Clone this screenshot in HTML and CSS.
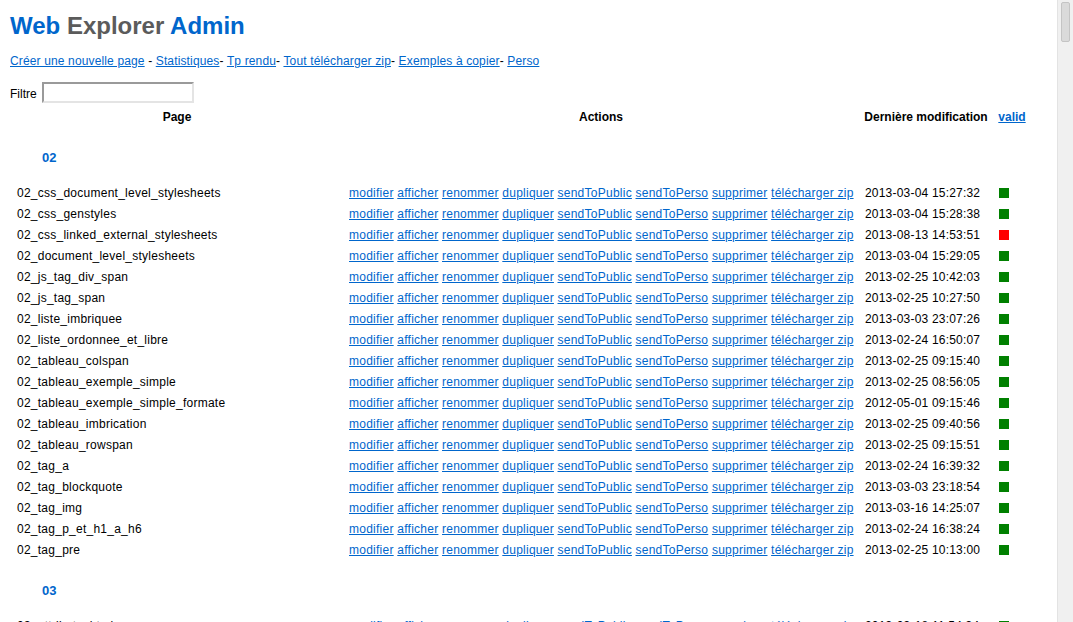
FILE: index.html
```html
<!DOCTYPE html>
<html lang="fr">
<head>
<meta charset="utf-8">
<title>Web Explorer Admin</title>
<link rel="stylesheet" href="styles.css">
</head>
<body>
<div class="page">
  <h1 class="title"><span class="t-blue">Web</span> <span class="t-gray">Explorer</span> <span class="t-blue">Admin</span></h1>
  <p class="menu"><a href="#">Créer une nouvelle page</a> - <a href="#">Statistiques</a>- <a href="#">Tp rendu</a>- <a href="#">Tout télécharger zip</a>- <a href="#">Exemples à copier</a>- <a href="#">Perso</a></p>
  <div class="filter"><label class="filter-label" for="f">Filtre</label><input id="f" class="filter-input" type="text"></div>
  <table class="list">
    <thead>
      <tr class="head-row">
        <th class="c-page">Page</th>
        <th class="c-actions">Actions</th>
        <th class="c-date">Dernière modification</th>
        <th class="c-valid"><a href="#">valid</a></th>
      </tr>
    </thead>
    <tbody id="rows"></tbody>
  </table>
</div>
<div class="scrollbar"><div class="thumb"></div></div>
<script src="script.js"></script>
</body>
</html>
```

FILE: styles.css
```css
html, body {
  margin: 0;
  padding: 0;
  background: #fff;
}
body {
  font-family: "Liberation Sans", Arial, sans-serif;
  font-size: 12px;
  color: #000;
}
a {
  color: #0066cc;
  text-decoration: underline;
}
.page {
  padding: 0 0 40px 10px;
}
.title {
  margin: 12px 0 0 0;
  font-size: 24px;
  line-height: 28px;
  font-weight: bold;
}
.t-blue { color: #0066cc; }
.t-gray { color: #5b5b5b; }
.menu {
  margin: 14px 0 0 0;
  line-height: 14px;
  letter-spacing: 0.14px;
}
.filter {
  margin-top: 14px;
  display: flex;
  align-items: center;
  height: 21px;
}
.filter-label {
  line-height: 14px;
  padding-top: 2px;
  width: 32px;
}
.filter-input {
  box-sizing: border-box;
  width: 152px;
  height: 21px;
  margin: 0;
  padding: 1px 2px;
  border: 2px solid;
  border-color: #9a9a9a #e4e4e4 #e4e4e4 #9a9a9a;
  font: 12px "Liberation Sans", Arial, sans-serif;
  background: #fff;
}
.list {
  margin: 3px 0 0 3px;
  border-collapse: collapse;
  table-layout: fixed;
  width: 1020px;
}
.list th, .list td {
  padding: 0;
  height: 21px;
  line-height: 14px;
  white-space: nowrap;
  vertical-align: middle;
}
.list td {
  letter-spacing: 0.25px;
}
.list th {
  font-weight: bold;
  text-align: center;
}
.c-page { width: 328px; }
.c-actions { width: 520px; }
.c-date { width: 130px; }
.c-valid { width: 42px; }
.list td.p { padding-left: 4px; }
.list td.a { padding-left: 8px; }
.list td.d { padding-left: 4px; letter-spacing: 0.2px; }
.list td.v { padding-left: 8px; }
.group td {
  height: auto;
  padding: 23px 0 17px 29px;
  font-size: 13px;
  line-height: 15px;
  font-weight: bold;
  color: #0066cc;
  letter-spacing: 0;
}
.sq {
  display: block;
  width: 10px;
  height: 10px;
}
.sq.ok { background: #008000; }
.sq.ko { background: #ff0000; }
.scrollbar {
  position: fixed;
  top: 0;
  right: 0;
  bottom: 0;
  width: 15px;
  background: #f0f0f0;
  border-left: 1px solid #e3e3e3;
}
.thumb {
  margin: 2px 0 0 3px;
  width: 9px;
  height: 40px;
  box-sizing: border-box;
  background: #dadada;
  border: 1px solid #c4c4c4;
  border-radius: 2px;
}
```

FILE: script.js
```js
var groups = [
  ["02", [
    ["02_css_document_level_stylesheets", "2013-03-04 15:27:32", 1],
    ["02_css_genstyles", "2013-03-04 15:28:38", 1],
    ["02_css_linked_external_stylesheets", "2013-08-13 14:53:51", 0],
    ["02_document_level_stylesheets", "2013-03-04 15:29:05", 1],
    ["02_js_tag_div_span", "2013-02-25 10:42:03", 1],
    ["02_js_tag_span", "2013-02-25 10:27:50", 1],
    ["02_liste_imbriquee", "2013-03-03 23:07:26", 1],
    ["02_liste_ordonnee_et_libre", "2013-02-24 16:50:07", 1],
    ["02_tableau_colspan", "2013-02-25 09:15:40", 1],
    ["02_tableau_exemple_simple", "2013-02-25 08:56:05", 1],
    ["02_tableau_exemple_simple_formate", "2012-05-01 09:15:46", 1],
    ["02_tableau_imbrication", "2013-02-25 09:40:56", 1],
    ["02_tableau_rowspan", "2013-02-25 09:15:51", 1],
    ["02_tag_a", "2013-02-24 16:39:32", 1],
    ["02_tag_blockquote", "2013-03-03 23:18:54", 1],
    ["02_tag_img", "2013-03-16 14:25:07", 1],
    ["02_tag_p_et_h1_a_h6", "2013-02-24 16:38:24", 1],
    ["02_tag_pre", "2013-02-25 10:13:00", 1]
  ]],
  ["03", [
    ["03_attributs_html", "2013-03-18 11:54:34", 1],
    ["03_balises_html5", "2013-03-18 11:58:12", 1],
    ["03_formulaire", "2013-03-18 12:04:51", 1]
  ]]
];
var actions = ["modifier", "afficher", "renommer", "dupliquer", "sendToPublic", "sendToPerso", "supprimer", "télécharger zip"];
var tbody = document.getElementById("rows");
var html = "";
groups.forEach(function (g) {
  html += '<tr class="group"><td colspan="4">' + g[0] + '</td></tr>';
  g[1].forEach(function (r) {
    html += '<tr><td class="p">' + r[0] + '</td><td class="a">' +
      actions.map(function (a) { return '<a href="#">' + a + '</a>'; }).join(" ") +
      '</td><td class="d">' + r[1] + '</td><td class="v"><span class="sq ' + (r[2] ? "ok" : "ko") + '"></span></td></tr>';
  });
});
tbody.innerHTML = html;
```
